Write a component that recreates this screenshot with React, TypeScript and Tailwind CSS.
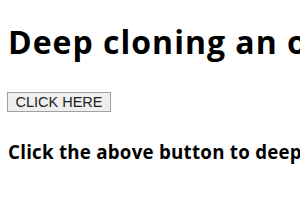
import React from "react";

export default function App() {
  return (
    <div className="min-h-[210px] w-[300px] overflow-hidden bg-white px-2 text-black" style={{ fontFamily: '"Open Sans", "Noto Sans", sans-serif' }}>
      <h1 className="pt-[20px] text-[32px] font-bold leading-[43px] tracking-[1px] whitespace-nowrap">Deep cloning an object</h1>
      <div className="mt-[26px]">
        <button className="h-[20px] w-[104px] -ml-px border border-[#a0a0a0] bg-[#efefef] text-[14.5px] leading-[18px] text-[#222]" style={{ fontFamily: '"Liberation Sans", Arial, sans-serif' }}>
          CLICK HERE
        </button>
      </div>
      <h3 className="mt-[26px] text-[18.72px] font-bold leading-[25px] tracking-[0.25px] whitespace-nowrap">Click the above button to deep clone the object</h3>
    </div>
  );
}
